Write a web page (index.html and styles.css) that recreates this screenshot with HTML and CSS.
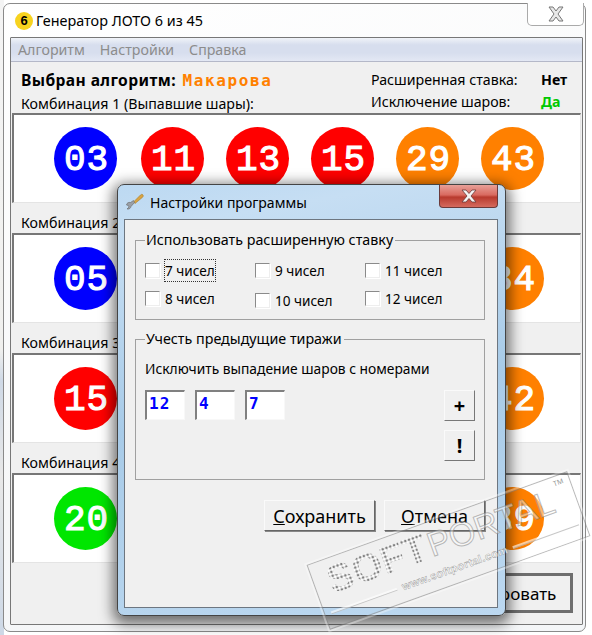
FILE: index.html
```html
<!DOCTYPE html>
<html lang="ru">
<head>
<meta charset="utf-8">
<title>Генератор ЛОТО 6 из 45</title>
<link rel="stylesheet" href="styles.css">
</head>
<body>
<div class="desk"></div>
<main class="win">
  <div class="win-title">
    <span class="app-icon">6</span>
    <span class="win-caption">Генератор ЛОТО 6 из 45</span>
    <span class="win-close"><svg width="18" height="16" viewBox="0 0 18 16"><path d="M2 1h4l3 4 3-4h4l-5 7 5 7h-4l-3-4-3 4H2l5-7z" fill="#e8e8e8" stroke="#777" stroke-width="1"/></svg></span>
  </div>
  <div class="client">
    <nav class="menu"><span>Алгоритм</span><span>Настройки</span><span>Справка</span></nav>
    <header class="head">
      <div class="algo">
        <div class="algo-name"><b>Выбран алгоритм:</b> <strong>Макарова</strong></div>
        <h2 class="first-label">Комбинация 1 (Выпавшие шары):</h2>
      </div>
      <dl class="opts">
        <dt>Расширенная ставка:</dt><dd class="no">Нет</dd>
        <dt>Исключение шаров:</dt><dd class="yes">Да</dd>
      </dl>
    </header>
    <div class="balls"><i class="b blue">03</i><i class="b red">11</i><i class="b red">13</i><i class="b red">15</i><i class="b orange">29</i><i class="b orange">43</i></div>
    <section class="combo">
      <h2>Комбинация 2</h2>
      <div class="balls"><i class="b blue">05</i><i class="b red"></i><i class="b red"></i><i class="b red"></i><i class="b orange"></i><i class="b orange">34</i></div>
    </section>
    <section class="combo">
      <h2>Комбинация 3</h2>
      <div class="balls"><i class="b red">15</i><i class="b red"></i><i class="b green"></i><i class="b green"></i><i class="b orange"></i><i class="b orange">42</i></div>
    </section>
    <section class="combo">
      <h2>Комбинация 4</h2>
      <div class="balls"><i class="b green">20</i><i class="b green"></i><i class="b green"></i><i class="b orange"></i><i class="b orange"></i><i class="b orange">39</i></div>
    </section>
    <div class="actions"><button class="go">Сгенерировать</button></div>
  </div>
</main>

<aside class="dlg">
  <div class="dlg-title">
    <svg class="wrench" width="20" height="20" viewBox="0 0 20 20"><path d="M17.500 2.500c1 .8 1 1.800 0 2.800L10 11.500 8.500 10l7-7c.7-.6 1.400-.9 2-.5z" fill="#d9a441" stroke="#a87a25" stroke-width=".6"/><path d="M9.500 10.500 6 14.500c-.4 1.900-2 3-4 2.500l2-2-.7-1.500L1.500 13c.3-2 2-3 4-2.500L8.500 8.500z" fill="#9a9fa6" stroke="#666" stroke-width=".6"/></svg>
    <span class="dlg-caption">Настройки программы</span>
    <span class="dlg-close"><svg width="18" height="14" viewBox="0 0 18 14"><path d="M2 1h4l3 3.500L12 1h4l-5 6 5 6h-4L9 9.500 6 13H2l5-6z" fill="#f4f4f4" stroke="#6b3a3a" stroke-width=".8"/></svg></span>
  </div>
  <div class="dlg-body">
    <fieldset class="group g1">
      <legend>Использовать расширенную ставку</legend>
      <div class="checks">
        <label class="chk"><span class="box"></span><span class="focus">7 чисел</span></label>
        <label class="chk"><span class="box"></span><span>9 чисел</span></label>
        <label class="chk"><span class="box"></span><span>11 чисел</span></label>
        <label class="chk"><span class="box"></span><span>8 чисел</span></label>
        <label class="chk low"><span class="box"></span><span>10 чисел</span></label>
        <label class="chk"><span class="box"></span><span>12 чисел</span></label>
      </div>
    </fieldset>
    <fieldset class="group g2">
      <legend>Учесть предыдущие тиражи</legend>
      <p class="hint">Исключить выпадение шаров с номерами</p>
      <div class="nums">
        <div class="fields"><span class="field">12</span><span class="field">4</span><span class="field">7</span></div>
        <div class="side"><button class="small">+</button><button class="small">!</button></div>
      </div>
    </fieldset>
    <div class="dlg-btns">
      <button class="btn save"><u>С</u>охранить</button>
      <button class="btn cancel"><u>О</u>тмена</button>
    </div>
  </div>
</aside>

<div class="mark-clip">
  <div class="mark">
    <div class="mark-main"><span class="soft">SOFT</span><span class="portal">PORTAL</span></div>
    <sup class="tm">TM</sup>
    <div class="mark-url">www.softportal.com</div>
  </div>
</div>
</body>
</html>
```
FILE: styles.css
```css
html, body { margin: 0; padding: 0; height: 100%; overflow: hidden; }
body { background: #fff; font-family: "Noto Sans", sans-serif; font-size: 14px; color: #000; position: relative; }

.desk { position: absolute; left: 0; top: 0; width: 4px; height: 635px; background: linear-gradient(180deg, #f4f4f4 0, #f0f0ee 55%, #cfd9e6 60%, #e8e8e8 75%, #cdd8e6 100%); }

.win { position: absolute; left: 3px; top: 3px; width: 583px; height: 629px; box-sizing: border-box; border: 1px solid #8a8a8a; border-radius: 7px; background: linear-gradient(160deg, #fff 0, #f6f7f8 60%, #f4f6f8 100%); padding: 0 2px 6px 6px; display: flex; flex-direction: column; }
.win-title { height: 33px; flex: none; display: flex; align-items: center; padding-left: 6px; position: relative; }
.app-icon { width: 18px; height: 18px; border-radius: 50%; background: #f7d31f; font: bold 13px/18px "Liberation Sans", sans-serif; text-align: center; margin-right: 3px; margin-left: -1px; }
.win-caption { font-size: 14.4px; line-height: 18px; }
.win-close { position: absolute; right: -1px; top: -1px; width: 57px; height: 23px; box-sizing: border-box; border: 1px solid #aaa; border-top: 0; border-radius: 0 0 5px 5px; background: #fff; display: flex; align-items: center; justify-content: center; }

.client { flex: 1; border: 1px solid #777; background: #f0f0f0; display: flex; flex-direction: column; border-radius: 1px; }
.menu { height: 23px; flex: none; display: flex; gap: 15px; padding-left: 7px; align-items: center; color: #8c8c8c; font-size: 14.2px; background: linear-gradient(180deg, #f0f3f8 0, #d7deee 30%, #d7deee 65%, #e3e8f4 100%); border-bottom: 1px solid #b4b8c8; }

.head { height: 51px; flex: none; display: flex; justify-content: space-between; padding: 8px 0 0 10px; box-sizing: border-box; }
.algo-name { line-height: 20px; white-space: nowrap; }
.algo-name b { font-size: 15.6px; letter-spacing: .4px; }
.algo-name strong { font-family: "DejaVu Sans Mono", monospace; color: #ff8000; font-size: 16px; letter-spacing: 1.6px; margin-left: 3px; }
.first-label { margin-top: 3px; }
.opts { margin: 0; display: grid; grid-template-columns: 170px 41px; line-height: 19px; font-size: 14.2px; }
.opts dd { margin: 0; font-weight: bold; }
.opts dd.yes { color: #00c800; }

h2 { margin: 0; font-weight: normal; font-size: 14.2px; line-height: 20px; }
.combo { height: 120px; flex: none; display: flex; flex-direction: column; justify-content: flex-end; }
.combo h2 { padding-left: 10px; }
.balls { height: 90px; box-sizing: border-box; flex: none; margin: 0 1px; background: #fff; border-style: solid; border-width: 2px 1px 1px 2px; border-color: #777 #e4e4e4 #e4e4e4 #777; display: flex; gap: 22px; padding: 12px 0 0 40px; }
.b { width: 63px; height: 63px; border-radius: 50%; font: normal 36px/67px "Liberation Mono", monospace; letter-spacing: 1px; text-indent: 2px; -webkit-text-stroke: 1.1px #fff; color: #fff; text-align: center; flex: none; }
.b:first-child { margin-right: 2px; }
.blue { background: #0000ff; }
.red { background: #ff0000; }
.orange { background: #ff8000; }
.green { background: #00e600; }

.actions { flex: 1; display: flex; justify-content: flex-end; padding: 10px 9px 0 0; align-items: flex-start; }
button { font-family: "Noto Sans", sans-serif; color: #000; background: #f0f0f0; padding: 0; cursor: default; }
.go { width: 158px; height: 40px; border: 3px solid #6e6e6e; font-size: 17px; }

.dlg { position: absolute; left: 117px; top: 184px; width: 389px; height: 432px; box-sizing: border-box; border: 1px solid #444; border-radius: 7px; padding: 0 7px 7px 6px; background: linear-gradient(170deg, #bcd9f2 0, #c6def3 10%, #a8cbe8 50%, #bcd8f0 100%); box-shadow: 0 4px 14px 4px rgba(0,0,0,.55); display: flex; flex-direction: column; }
.dlg-title { height: 34px; flex: none; display: flex; align-items: center; position: relative; }
.wrench { margin: 0 5px 0 1px; }
.dlg-caption { font-size: 14px; }
.dlg-close { position: absolute; right: 0; top: 0; width: 59px; height: 23px; box-sizing: border-box; border: 1px solid #6b3a3a; border-top: 0; border-radius: 0 0 4px 4px; background: linear-gradient(180deg, #e8a098 0, #d96a60 45%, #b83a2e 55%, #d56a5e 100%); display: flex; align-items: center; justify-content: center; }
.dlg-body { flex: 1; background: #f0f0f0; border: 1px solid #6d7680; padding: 12px 12px 0 10px; display: flex; flex-direction: column; }

.group { margin: 0; padding: 0 9px; border: 1px solid #a0a0a0; min-width: 0; position: relative; box-sizing: border-box; }
.group legend { padding: 0 2px 0 1px; font-size: 14.3px; line-height: 16px; white-space: nowrap; }
.g1 { height: 88px; }
.checks { display: grid; grid-template-columns: 110px 110px 110px; grid-auto-rows: 28px; margin-top: 13px; }
.chk { display: flex; align-items: center; gap: 5px; font-size: 13.6px; height: 18px; }
.chk.low { position: relative; top: 2px; }
.box { width: 13px; height: 13px; flex: none; background: #fff; border: 1px solid #8a8a8a; border-right-color: #eee; border-bottom-color: #eee; box-shadow: 1px 1px 0 #fff; }
.focus { outline: 1px dotted #333; padding: 1px 0; }
.g2 { height: 149px; margin-top: 11px; }
.hint { margin: 13px 0 0; font-size: 13.8px; line-height: 18px; white-space: nowrap; }
.nums { display: flex; justify-content: space-between; margin-top: 12px; }
.fields { display: flex; gap: 10px; align-items: flex-start; }
.field { width: 40px; height: 30px; box-sizing: border-box; background: #fff; border: 2px solid #808080; border-right: 1px solid #f8f8f8; border-bottom: 1px solid #f8f8f8; color: #0000ff; font: bold 16px/24px "DejaVu Sans Mono", monospace; letter-spacing: 1px; padding-left: 2px; }
.side { display: flex; flex-direction: column; gap: 9px; }
.small { width: 31px; height: 31px; font-size: 20px; font-weight: bold; border: 1px solid; border-color: #fafafa #777 #777 #fafafa; }
.dlg-btns { display: flex; justify-content: flex-end; gap: 9px; margin-top: 20px; }
.btn { height: 31px; font-size: 18px; line-height: 26px; border: 1px solid; border-color: #fafafa #666 #666 #fafafa; box-shadow: 1px 1px 0 #888; }
.save { width: 111px; }
.cancel { width: 101px; }

.mark-clip { position: absolute; left: 0; top: 0; width: 592px; height: 635px; overflow: hidden; pointer-events: none; }
.mark { position: absolute; left: 310px; top: 516px; width: 277px; height: 69px; box-sizing: border-box; border: 1px solid rgba(130,130,130,.55); outline: 2px solid rgba(255,255,255,.35); transform: rotate(-19.8deg); }
.mark-main { display: flex; align-items: center; height: 44px; padding-left: 14px; font-family: "Liberation Sans", sans-serif; line-height: 44px; white-space: nowrap; }
.soft { font-size: 39px; font-weight: bold; background: radial-gradient(circle, rgba(130,130,130,1) 1.2px, rgba(255,255,255,1) 1.7px) 0 0/4px 4px; -webkit-background-clip: text; background-clip: text; color: transparent; }
.portal { font-size: 34px; margin-left: 2px; color: rgba(255,255,255,.45); -webkit-text-stroke: 1px rgba(120,120,120,.5); }
.tm { position: absolute; right: 6px; top: 3px; font-size: 7px; line-height: 8px; color: rgba(120,120,120,.8); }
.mark-url { display: flex; align-items: center; gap: 6px; padding: 0 6px; font: bold 11px/16px "Liberation Sans", sans-serif; color: rgba(255,255,255,.8); -webkit-text-stroke: .4px rgba(110,110,110,.75); letter-spacing: .4px; white-space: nowrap; }
.mark-url::before, .mark-url::after { content: ""; flex: 1; height: 2px; background: rgba(255,255,255,.6); border-bottom: 1px solid rgba(130,130,130,.45); }
```
